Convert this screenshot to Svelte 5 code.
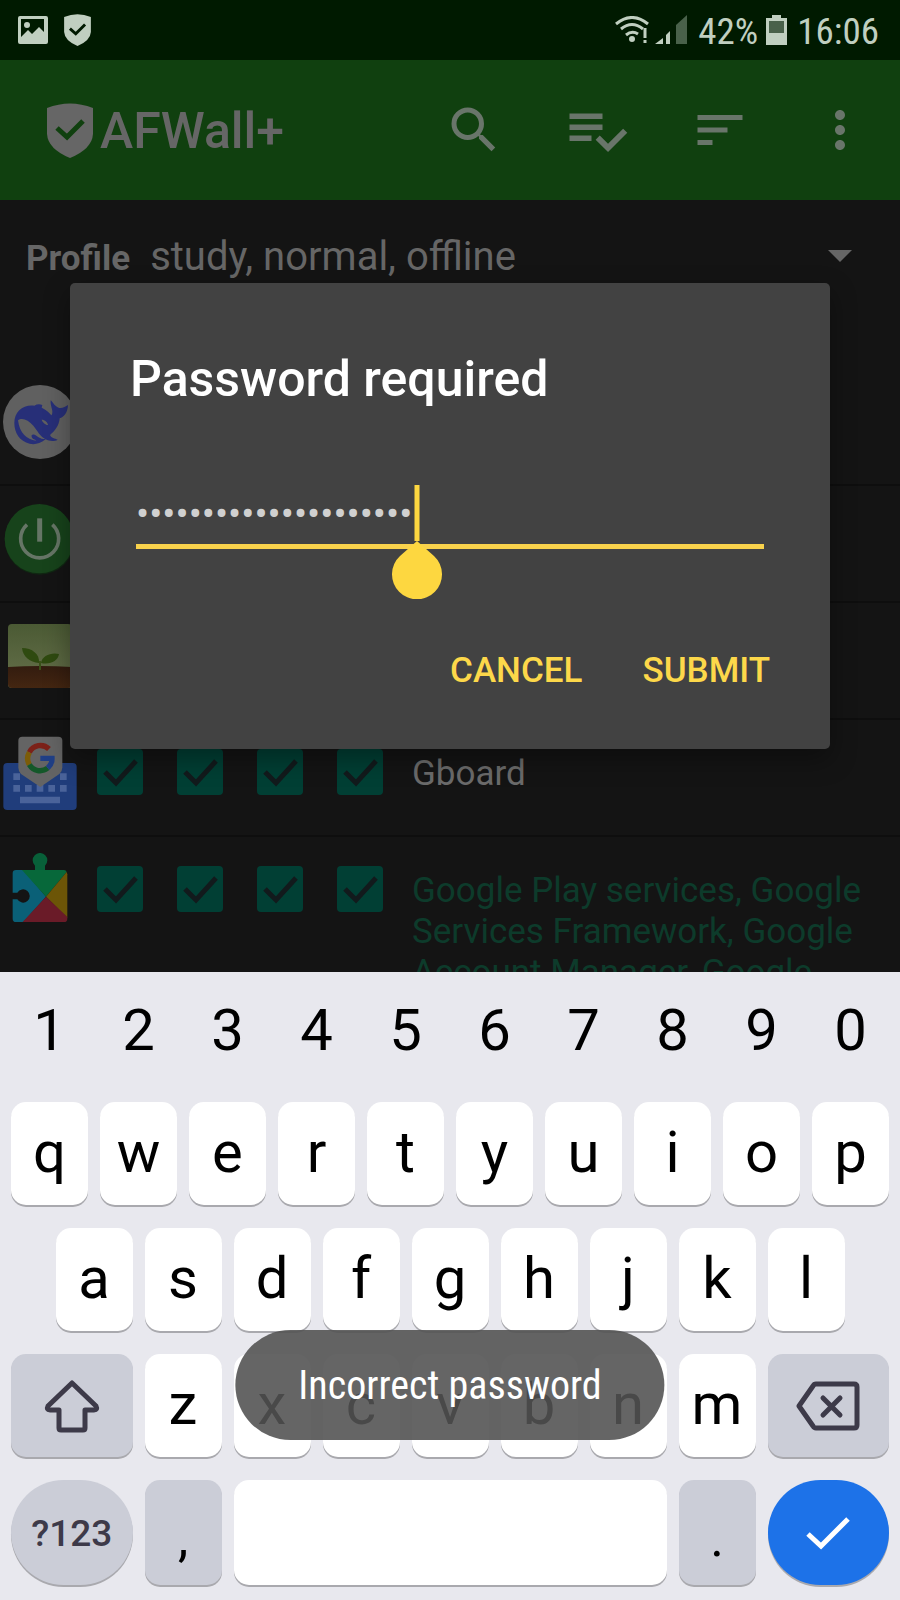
<script>
  let password = $state('afwall-offline-study1');

  const digits = ['1', '2', '3', '4', '5', '6', '7', '8', '9', '0'];
  const topRow = ['q', 'w', 'e', 'r', 't', 'y', 'u', 'i', 'o', 'p'];
  const homeRow = ['a', 's', 'd', 'f', 'g', 'h', 'j', 'k', 'l'];
  const bottomRow = ['z', 'x', 'c', 'v', 'b', 'n', 'm'];
  const networks = ['LAN', 'Wi-Fi', 'Mobile', 'Roaming'];

  const apps = [
    { icon: 'whale' },
    { icon: 'power' },
    { icon: 'sprout' },
    { icon: 'gboard', name: 'Gboard' },
    {
      icon: 'play',
      name: 'Google Play services, Google Services Framework, Google Account Manager, Google',
      system: true
    }
  ];
</script>

{#snippet shield(cls)}
  <svg class={cls} viewBox="0 0 46 55" aria-hidden="true">
    <path fill="currentColor" d="M0 5Q23-4 46 5V31Q45 46 23 55Q1 46 0 31Z" />
    <path class="tick" d="M10 25l10 9 16-16" fill="none" stroke-width="5" />
  </svg>
{/snippet}

<div class="screen">
  <div class="status">
    <svg class="photo" viewBox="0 0 30 28" aria-hidden="true">
      <path fill="currentColor" fill-rule="evenodd" d="M2 0H28Q30 0 30 2V26Q30 28 28 28H2Q0 28 0 26V2Q0 0 2 0ZM3 3V21L10 14 14 18 21 11 26 16V3Z" />
      <circle cx="9" cy="9" r="3" fill="currentColor" />
    </svg>
    {@render shield('mini')}
    <div class="indicators">
      <svg class="wifi" viewBox="0 0 34 28" aria-hidden="true">
        <g fill="none" stroke="currentColor" stroke-width="3">
          <path d="M1 8Q17-5 33 8" />
          <path d="M6 13Q17 4 28 13" />
          <path d="M11 19Q17 14 23 18" />
          <path d="M30 12V22M30 24V27" />
        </g>
        <circle cx="17" cy="23" r="3" fill="currentColor" />
      </svg>
      <svg class="signal" viewBox="0 0 32 30" aria-hidden="true">
        <path fill="currentColor" d="M0 29L8 23V29ZM11 20L15 16V29H11Z" />
        <path fill="#49614a" d="M21 10L32 0V29H21Z" />
      </svg>
      <span class="pct">42%</span>
      <svg class="battery" viewBox="0 0 21 30" aria-hidden="true">
        <path fill="currentColor" d="M6 0H15V3H21V30H0V3H6Z" />
        <path fill="#49614a" d="M3 6H18V18H3Z" />
      </svg>
      <span class="time">16:06</span>
    </div>
  </div>

  <div class="app">
    <header>
      {@render shield('brand')}
      <h1>AFWall+</h1>
      <nav>
        <button aria-label="Search">
          <svg width="60" height="60" viewBox="0 0 24 24"><path d="M15.5 14h-.79l-.28-.27A6.471 6.471 0 0 0 16 9.500 6.500 6.500 0 1 0 9.500 16c1.610 0 3.090-.59 4.230-1.570l.27.28v.79l5 4.990L20.490 19l-4.990-5zm-6 0C7.010 14 5 11.990 5 9.500S7.010 5 9.500 5 14 7.010 14 9.500 11.990 14 9.500 14z" /></svg>
        </button>
        <button aria-label="Apply rules">
          <svg width="66" height="66" viewBox="0 0 24 24"><path d="M14 10H2v2h12v-2zm0-4H2v2h12V6zM2 16h8v-2H2v2zm19.500-4.500L23 13l-6.990 7-4.510-4.500L13 14l3.010 3 5.490-5.500z" /></svg>
        </button>
        <button aria-label="Sort">
          <svg width="60" height="60" viewBox="0 0 24 24"><path d="M3 18h6v-2H3v2zM3 6v2h18V6H3zm0 7h12v-2H3v2z" /></svg>
        </button>
        <button aria-label="More options">
          <svg width="60" height="60" viewBox="0 0 24 24"><path d="M12 8c1.100 0 2-.9 2-2s-.9-2-2-2-2 .9-2 2 .9 2 2 2zm0 2c-1.100 0-2 .9-2 2s.9 2 2 2 2-.9 2-2-.9-2-2-2zm0 6c-1.100 0-2 .9-2 2s.9 2 2 2 2-.9 2-2-.9-2-2-2z" /></svg>
        </button>
      </nav>
    </header>

    <div class="profile">
      <label for="profile">Profile</label>
      <select id="profile">
        <option>study, normal, offline</option>
      </select>
      <svg width="24" height="12" viewBox="0 0 24 12" aria-hidden="true"><path fill="#666" d="M0 0H24L12 12Z" /></svg>
    </div>

    <ul>
      {#each apps as app}
        <li>
          <div class="icon">
            {#if app.icon === 'whale'}
              <svg width="74" height="74" viewBox="10 46 222 222">
                <circle cx="121" cy="157" r="111" fill="#606060" />
                <path fill="#272f78" d="M44 160C44 126 70 104 104 108C112 103 121 103 128 106L126 114C142 121 150 132 156 137C163 122 151 112 153 92C160 98 164 110 179 115C190 116 198 110 205 106C204 128 193 143 180 146C178 168 166 184 151 196C155 206 165 206 174 210C162 217 148 214 138 209C120 222 105 226 90 222C60 215 44 190 44 160Z" />
                <path fill="#606060" d="M55 152C66 142 86 150 101 168C114 184 121 200 136 207C128 211 120 205 112 200C104 193 94 192 96 202C99 210 106 208 110 213C80 210 60 190 55 152Z" />
                <path fill="#606060" d="M126 150C136 150 144 158 145 166C138 166 128 158 126 150Z" />
              </svg>
            {:else if app.icon === 'power'}
              <svg width="74" height="74" viewBox="10 396 222 222">
                <circle cx="120" cy="509" r="105" fill="#102612" />
                <circle cx="119" cy="506" r="104" fill="#17431b" />
                <path d="M82 464A57 57 0 1 0 158 464" fill="none" stroke="#667566" stroke-width="11" />
                <path d="M120 445V515" stroke="#667566" stroke-width="15" />
              </svg>
            {:else if app.icon === 'sprout'}
              <svg width="64" height="64" viewBox="0 0 64 64">
                <defs>
                  <linearGradient id="sky" x2="0" y2="1">
                    <stop offset="0" stop-color="#4b5a34" />
                    <stop offset="1" stop-color="#66714b" />
                  </linearGradient>
                  <linearGradient id="soil" x2="0" y2="1">
                    <stop offset="0" stop-color="#331c0f" />
                    <stop offset="1" stop-color="#442611" />
                  </linearGradient>
                </defs>
                <rect width="64" height="64" rx="4" fill="url(#sky)" />
                <path fill="url(#soil)" d="M0 43Q32 41 64 43V60Q64 64 60 64H4Q0 64 0 60Z" />
                <path fill="#2f4a10" d="M14 24C24 24 32 30 31 39C22 38 15 33 14 24ZM51 30C43 28 34 32 33 39C42 41 50 37 51 30Z" />
                <path stroke="#3a5018" stroke-width="2" d="M32 37V46" />
              </svg>
            {:else if app.icon === 'gboard'}
              <svg width="74" height="74" viewBox="9 46 222 222">
                <rect x="10" y="127" width="220" height="141" rx="12" fill="#203d7b" />
                <g fill="#4a639a">
                  <path d="M40 158h20v20H40zM180 158h20v20h-20zM40 193h20v20H40zM75 193h20v20H75zM110 193h20v20h-20zM145 193h20v20h-20zM180 193h20v20h-20zM60 228h120v20H60z" />
                </g>
                <path fill="#646464" d="M67 48H175Q187 48 187 60V140Q187 152 178 160L121 199L63 160Q55 152 55 140V60Q55 48 67 48Z" />
                <g fill="none" stroke-width="16">
                  <path stroke="#7c2118" d="M147 85A37 37 0 0 0 88 95" />
                  <path stroke="#7c5c08" d="M88 95A37 37 0 0 0 88 132" />
                  <path stroke="#145829" d="M88 132A37 37 0 0 0 143 142" />
                  <path stroke="#203f86" d="M143 142A37 37 0 0 0 156 113H121" />
                </g>
              </svg>
            {:else}
              <svg width="74" height="74" viewBox="9 396 222 222">
                <path fill="#086039" d="M105 450V434A22 22 0 1 1 135 434V450Z" />
                <path fill="#0a6077" d="M48 447H70L138 527L70 603H48Q38 603 38 593V535H52A20 20 0 1 0 52 515H38V457Q38 447 48 447Z" />
                <path fill="#07683a" d="M66 447H192Q198 447 200 453L138 527Z" />
                <path fill="#6c5507" d="M200 453L202 460V590L138 527Z" />
                <path fill="#6a1b28" d="M138 527L202 588V593Q202 603 192 603H68Z" />
              </svg>
            {/if}
          </div>
          {#if app.name}
            {#each networks as network}
              <input type="checkbox" checked aria-label={network} />
            {/each}
            <p class:system={app.system}>{app.name}</p>
          {/if}
        </li>
      {/each}
    </ul>

    <div class="overlay">
      <form class="dialog" role="dialog" aria-labelledby="dialog-title" onsubmit={(e) => e.preventDefault()}>
        <h2 id="dialog-title">Password required</h2>
        <div class="field">
          <input type="password" aria-labelledby="dialog-title" bind:value={password} />
          <svg class="caret" width="50" height="114" viewBox="0 0 50 114" aria-hidden="true">
            <path fill="#fdd740" d="M22.500 0H27.500V56H22.500ZM25 56L42 71A25 25 0 1 1 8 71Z" />
          </svg>
        </div>
        <div class="actions">
          <button type="button">CANCEL</button>
          <button type="submit">SUBMIT</button>
        </div>
      </form>
    </div>
  </div>

  <div class="keyboard">
    {#each digits as d}<button class="digit">{d}</button>{/each}
    {#each topRow as k}<button class="key">{k}</button>{/each}
    {#each homeRow as k}<button class="key" class:indent={k === 'a'}>{k}</button>{/each}
    <button class="key alt wide shift" aria-label="Shift">
      <svg width="56" height="54" viewBox="0 0 56 54" fill="none" stroke="#3d3a49" stroke-width="5" stroke-linejoin="round">
        <path d="M28 4L4 27Q2 31 6 31H15V49Q15 51 17 51H39Q41 51 41 49V31H50Q54 31 52 27Z" />
      </svg>
    </button>
    {#each bottomRow as k}<button class="key">{k}</button>{/each}
    <button class="key alt wide" aria-label="Backspace">
      <svg width="64" height="50" viewBox="0 0 64 50" fill="none" stroke="#3d3a49" stroke-width="5" stroke-linejoin="round" stroke-linecap="round">
        <path d="M20 3H58Q61 3 61 6V44Q61 47 58 47H20Q18 47 17 45L3 25L17 5Q18 3 20 3Z" />
        <path d="M27 17L44 34M44 17L27 34" />
      </svg>
    </button>
    <button class="key alt wide round symbols">?123</button>
    <button class="key alt mark">,</button>
    <button class="key space" aria-label="Space"></button>
    <button class="key alt mark">.</button>
    <button class="key wide round enter" aria-label="Done">
      <svg width="44" height="34" viewBox="0 0 44 34" fill="none" stroke="#fff" stroke-width="5"><path d="M2 18L15 30L42 3" /></svg>
    </button>
  </div>

  <div class="toast" role="status">Incorrect password</div>
</div>

<style>
  :global(body) {
    background: #141414;
  }
  .screen,
  .screen * {
    box-sizing: border-box;
  }
  .screen {
    position: relative;
    display: flex;
    flex-direction: column;
    height: 100vh;
    overflow: hidden;
    font-family: Roboto, sans-serif;
  }
  button,
  input,
  select {
    margin: 0;
    padding: 0;
    border: 0;
    background: none;
    font-family: inherit;
    outline: none;
  }
  svg {
    display: block;
    flex: none;
  }

  .status {
    display: flex;
    align-items: center;
    height: 60px;
    flex: none;
    padding: 0 21px 0 18px;
    background: #001a00;
    color: #c0cfc0;
    font-size: 37px;
  }
  .photo {
    width: 30px;
    height: 28px;
    margin-right: 16px;
  }
  .mini {
    width: 27px;
    height: 32px;
  }
  .mini .tick {
    stroke: #001a00;
  }
  .indicators {
    display: flex;
    align-items: center;
    margin-left: auto;
    font-family: 'Roboto Condensed', Roboto, sans-serif;
  }
  .indicators span {
    padding-top: 2px;
  }
  .wifi {
    width: 34px;
    height: 28px;
    margin-right: 6px;
  }
  .signal {
    width: 32px;
    height: 30px;
  }
  .pct {
    margin: 0 8px 0 11px;
  }
  .battery {
    width: 21px;
    height: 30px;
    margin-right: 10px;
  }

  .app {
    position: relative;
    flex: 1;
    min-height: 0;
    overflow: hidden;
    background: #141414;
  }
  header {
    display: flex;
    align-items: center;
    height: 140px;
    padding: 0 30px 0 47px;
    background: #10400f;
    color: #666;
  }
  .brand {
    width: 46px;
    height: 55px;
    margin-right: 7px;
  }
  .brand .tick {
    stroke: #10400f;
  }
  h1 {
    margin: 0;
    padding-top: 2px;
    font-size: 50px;
    font-weight: 500;
  }
  nav {
    display: flex;
    align-items: center;
    gap: 60px;
    margin-left: auto;
  }
  nav path {
    fill: #69756a;
  }

  .profile {
    display: flex;
    align-items: center;
    gap: 20px;
    height: 112px;
    margin-bottom: 57px;
    padding: 0 48px 0 26px;
    color: #666;
  }
  .profile label {
    padding-top: 4px;
    font-size: 35px;
    font-weight: 700;
  }
  select {
    flex: 1;
    appearance: none;
    color: inherit;
    font-size: 40px;
  }

  ul {
    margin: 0;
    padding: 0;
    list-style: none;
  }
  li {
    display: grid;
    grid-template-columns: repeat(5, 80px) 1fr;
    align-items: start;
    justify-items: center;
    padding-bottom: 9px;
    border-bottom: 2px solid #0e0e0e;
  }
  .icon {
    display: grid;
    place-items: center;
    height: 106px;
  }
  li input {
    appearance: none;
    width: 46px;
    height: 46px;
    margin-top: 29px;
    border-radius: 4px;
    background: #013f34 url("data:image/svg+xml,%3Csvg xmlns='http://www.w3.org/2000/svg' viewBox='0 0 46 46'%3E%3Cpath d='M8 23L19 34L39 12' fill='none' stroke='%23121a1c' stroke-width='5'/%3E%3C/svg%3E");
  }
  li p {
    justify-self: start;
    margin: 0;
    padding: 33px 20px 0 12px;
    color: #6b6b6b;
    font-size: 35px;
    line-height: 41px;
  }
  li p.system {
    color: #0d3b2b;
  }

  .overlay {
    position: absolute;
    inset: 0;
    display: flex;
    align-items: center;
    padding: 0 70px;
  }
  .dialog {
    flex: 1;
    padding: 66px 54px 46px 60px;
    border-radius: 5px;
    background: #424242;
    box-shadow: 0 10px 26px rgba(0, 0, 0, 0.35);
  }
  h2 {
    margin: 0;
    color: #fff;
    font-size: 50px;
    line-height: 60px;
    font-weight: 500;
  }
  .field {
    position: relative;
    margin: 66px 12px 0 6px;
  }
  .field input {
    display: block;
    width: 100%;
    height: 74px;
    padding-top: 8px;
    border-bottom: 5px solid #f9d24c;
    color: #d0d0d0;
    font-size: 39px;
  }
  .caret {
    position: absolute;
    top: 10px;
    left: 256px;
  }
  .actions {
    display: flex;
    justify-content: flex-end;
    gap: 48px;
    margin-top: 89px;
  }
  .actions button {
    padding: 0 6px;
    color: #fdd84a;
    font-size: 35px;
    line-height: 65px;
    font-weight: 500;
  }

  .keyboard {
    display: grid;
    grid-template-columns: repeat(20, 1fr);
    grid-template-rows: repeat(4, 103px) 105px;
    gap: 23px 12px;
    flex: none;
    padding: 4px 11px 15px;
    background: #e8e8ee;
  }
  .keyboard button {
    grid-column: span 2;
    display: flex;
    align-items: center;
    justify-content: center;
    min-width: 0;
    color: #000;
    font-size: 58px;
    line-height: 68px;
  }
  .keyboard .digit {
    padding-top: 4px;
  }
  .keyboard .key {
    padding-bottom: 4px;
    border-radius: 15px;
    background: #fff;
    box-shadow: 0 2px 0 #a9a9ae;
  }
  .keyboard .indent {
    grid-column: 2 / span 2;
  }
  .keyboard .wide {
    grid-column: span 3;
  }
  .keyboard .shift {
    grid-column: 1 / span 3;
  }
  .keyboard .alt {
    padding-bottom: 0;
    background: #cbcdd7;
  }
  .keyboard .round {
    border-radius: 56px;
  }
  .keyboard .symbols {
    padding-top: 2px;
    color: #3d3a49;
    font-size: 37px;
    font-weight: 500;
  }
  .keyboard .mark {
    padding-top: 12px;
    font-size: 52px;
  }
  .keyboard .space {
    grid-column: span 10;
  }
  .keyboard .enter {
    padding-bottom: 0;
    background: #1d72e8;
  }

  .toast {
    position: absolute;
    bottom: 160px;
    left: 50%;
    transform: translateX(-50%);
    padding: 2px 63px 0;
    border-radius: 55px;
    background: rgba(82, 82, 82, 0.89);
    color: #fff;
    font-family: 'Roboto Condensed', Roboto, sans-serif;
    font-size: 40px;
    line-height: 108px;
    white-space: nowrap;
  }
</style>
